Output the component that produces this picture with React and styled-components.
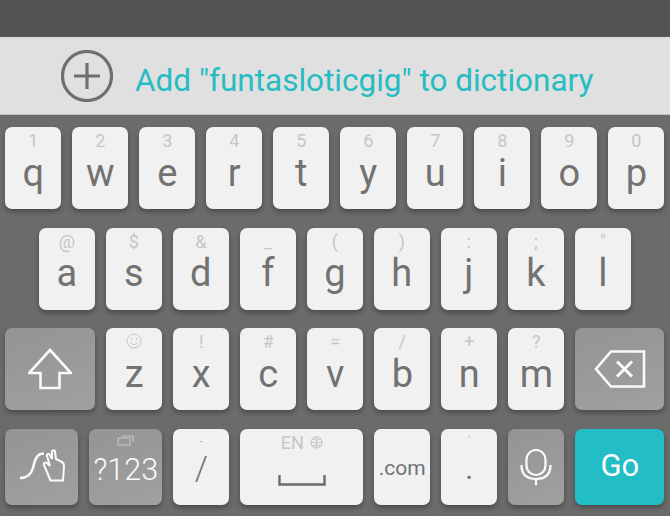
import React from "react";
import styled, { createGlobalStyle } from "styled-components";

const Global = createGlobalStyle`
  html, body {
    margin: 0;
    padding: 0;
    background: #6b6b6b;
  }
  * {
    box-sizing: border-box;
  }
`;

const Screen = styled.div`
  width: 670px;
  height: 516px;
  overflow: hidden;
  display: flex;
  flex-direction: column;
  background: #6b6b6b;
  font-family: Roboto, "Liberation Sans", sans-serif;
`;

const TopBar = styled.div`
  height: 37px;
  background: #535353;
  border-bottom: 1px solid #5c5c5c;
`;

const Suggestion = styled.div`
  height: 78px;
  display: flex;
  align-items: center;
  padding-left: 61px;
  background: #e0e0e0;
  border-top: 1px solid #d6d6d6;
  border-bottom: 1px solid #c4c4c4;
`;

const SuggestionText = styled.span`
  margin-left: 22px;
  margin-top: 9px;
  font-size: 31.5px;
  color: #26bcc4;
  white-space: nowrap;
`;

const Keyboard = styled.div`
  display: flex;
  flex-direction: column;
  gap: 18.5px;
  padding: 12px 5.7px 0 5.3px;
`;

const Row = styled.div`
  display: flex;
  justify-content: center;
  gap: 11px;
  height: ${(p) => p.$height || 82}px;
`;

const Key = styled.div`
  position: relative;
  flex: none;
  width: ${(p) => p.$width || 56}px;
  display: flex;
  align-items: center;
  justify-content: center;
  border-radius: 7px;
  box-shadow: 0 3px 5px rgba(0, 0, 0, 0.3);
  background: ${(p) =>
    p.$kind === "accent"
      ? "#22bdc5"
      : p.$kind === "func"
        ? "linear-gradient(160deg, #949494, #a0a0a0)"
        : "#f1f1f1"};
  color: ${(p) => (p.$kind ? "#fafafa" : "#727272")};
`;

const Letter = styled.span`
  margin-top: ${(p) => p.$top ?? 10}px;
  font-size: ${(p) => p.$size || 38}px;
  font-weight: ${(p) => p.$weight || 400};
  line-height: 0.8;
`;

const Hint = styled.span`
  position: absolute;
  top: ${(p) => (p.$small ? 3 : 5)}px;
  left: 0;
  right: 0;
  display: flex;
  justify-content: center;
  align-items: center;
  gap: 6px;
  font-size: ${(p) => (p.$small ? 14 : 18)}px;
  line-height: 18px;
  color: #c6c6c6;
`;

const Icon = styled.svg`
  display: block;
  fill: none;
  stroke: ${(p) => p.$stroke || "#fafafa"};
  stroke-width: ${(p) => p.$weight || 2};
`;

const SpaceBar = styled(Icon)`
  margin-top: 27px;
`;

const rows = [
  [["q", "1"], ["w", "2"], ["e", "3"], ["r", "4"], ["t", "5"], ["y", "6"], ["u", "7"], ["i", "8"], ["o", "9"], ["p", "0"]],
  [["a", "@"], ["s", "$"], ["d", "&"], ["f", "_"], ["g", "("], ["h", ")"], ["j", ":"], ["k", ";"], ["l", '"']],
];

const thirdRow = [["x", "!"], ["c", "#"], ["v", "="], ["b", "/"], ["n", "+"], ["m", "?"]];

const CharKey = ({ letter, hint }) => (
  <Key>
    <Hint>{hint}</Hint>
    <Letter>{letter}</Letter>
  </Key>
);

export default function App() {
  return (
    <Screen>
      <Global />
      <TopBar />
      <Suggestion>
        <Icon width="52" height="52" viewBox="0 0 52 52" $stroke="#6f6f6f" $weight="3.2">
          <circle cx="26" cy="26" r="24.5" />
          <path d="M13 26h26M26 13v26" />
        </Icon>
        <SuggestionText>Add "funtasloticgig" to dictionary</SuggestionText>
      </Suggestion>
      <Keyboard>
        {rows.map((row) => (
          <Row key={row[0][0]}>
            {row.map(([l, h]) => (
              <CharKey key={l} letter={l} hint={h} />
            ))}
          </Row>
        ))}
        <Row>
          <Key $kind="func" $width={90}>
            <Icon width="44" height="42" viewBox="0 0 44 42" $weight="2.6">
              <path d="M22 2 L43 25 H31.500 V40 H12.500 V25 H1 Z" />
            </Icon>
          </Key>
          <Key>
            <Hint>
              <Icon width="16" height="16" viewBox="0 0 16 16" $stroke="#c6c6c6" $weight="1">
                <circle cx="8" cy="8" r="7" />
                <path d="M4.200 9.200c1.400 3 6.200 3 7.600 0" />
                <path d="M5.500 5v2M10.500 5v2" />
              </Icon>
            </Hint>
            <Letter>z</Letter>
          </Key>
          {thirdRow.map(([l, h]) => (
            <CharKey key={l} letter={l} hint={h} />
          ))}
          <Key $kind="func" $width={89}>
            <Icon width="52" height="38" viewBox="0 0 52 38" $weight="2.6">
              <path d="M50 1.500 H17 L2 19 L17 36.500 H50 Z" />
              <path d="M23 11.500 L38 26.500 M38 11.500 L23 26.500" strokeWidth="3" />
            </Icon>
          </Key>
        </Row>
        <Row $height={76.5}>
          <Key $kind="func" $width={73}>
            <Icon width="46" height="40" viewBox="0 0 46 40" $weight="2">
              <path d="M1 31C8 31 12 28 14 21C16 12 18 6.500 25 6.500" strokeWidth="2.600" />
              <path d="M31.500 33.500 L25 18c-1-2 1-3 3-2l3 3L28 9c-.5-2 2-3 3-1l2 4L33 5c0-2.500 3-2.500 3 0L37 12l6 3c2 1 2 2 2 4L44 33.500Z" />
            </Icon>
          </Key>
          <Key $kind="func" $width={73}>
            <Hint>
              <Icon width="17" height="12" viewBox="0 0 17 12" $stroke="#c4c4c4" $weight="1.2">
                <rect x="1" y="4" width="12" height="7" />
                <path d="M4 2h12v6" />
              </Icon>
            </Hint>
            <Letter $size={30.5} $weight={300} $top={6}>?123</Letter>
          </Key>
          <Key>
            <Hint $small>-</Hint>
            <Letter $size={33} $weight={300} $top={4}>/</Letter>
          </Key>
          <Key $width={123}>
            <Hint>
              EN
              <Icon width="13" height="13" viewBox="0 0 14 14" $stroke="#c6c6c6" $weight="1.2">
                <circle cx="7" cy="7" r="6" />
                <path d="M1 7h12M7 1v12M3 3.500c2.500 1 5.500 1 8 0M3 10.500c2.500-1 5.500-1 8 0" />
              </Icon>
            </Hint>
            <SpaceBar width="48" height="11" viewBox="0 0 48 11" $stroke="#6a6a6a" $weight="2.4">
              <path d="M1.500 0v9.500h45V0" />
            </SpaceBar>
          </Key>
          <Key>
            <Letter $size={21} $top={4}>.com</Letter>
          </Key>
          <Key>
            <Hint $small>'</Hint>
            <Letter $size={30} $top={4}>.</Letter>
          </Key>
          <Key $kind="func">
            <Icon width="32" height="36" viewBox="0 0 32 36" $weight="2.2">
              <rect x="6.500" y="1" width="19" height="25" rx="9.500" />
              <path d="M1.500 16c0 9 5 14 14.500 14s14.500-5 14.500-14M16 30v6" />
            </Icon>
          </Key>
          <Key $kind="accent" $width={89}>
            <Letter $size={31} $top={0}>Go</Letter>
          </Key>
        </Row>
      </Keyboard>
    </Screen>
  );
}
